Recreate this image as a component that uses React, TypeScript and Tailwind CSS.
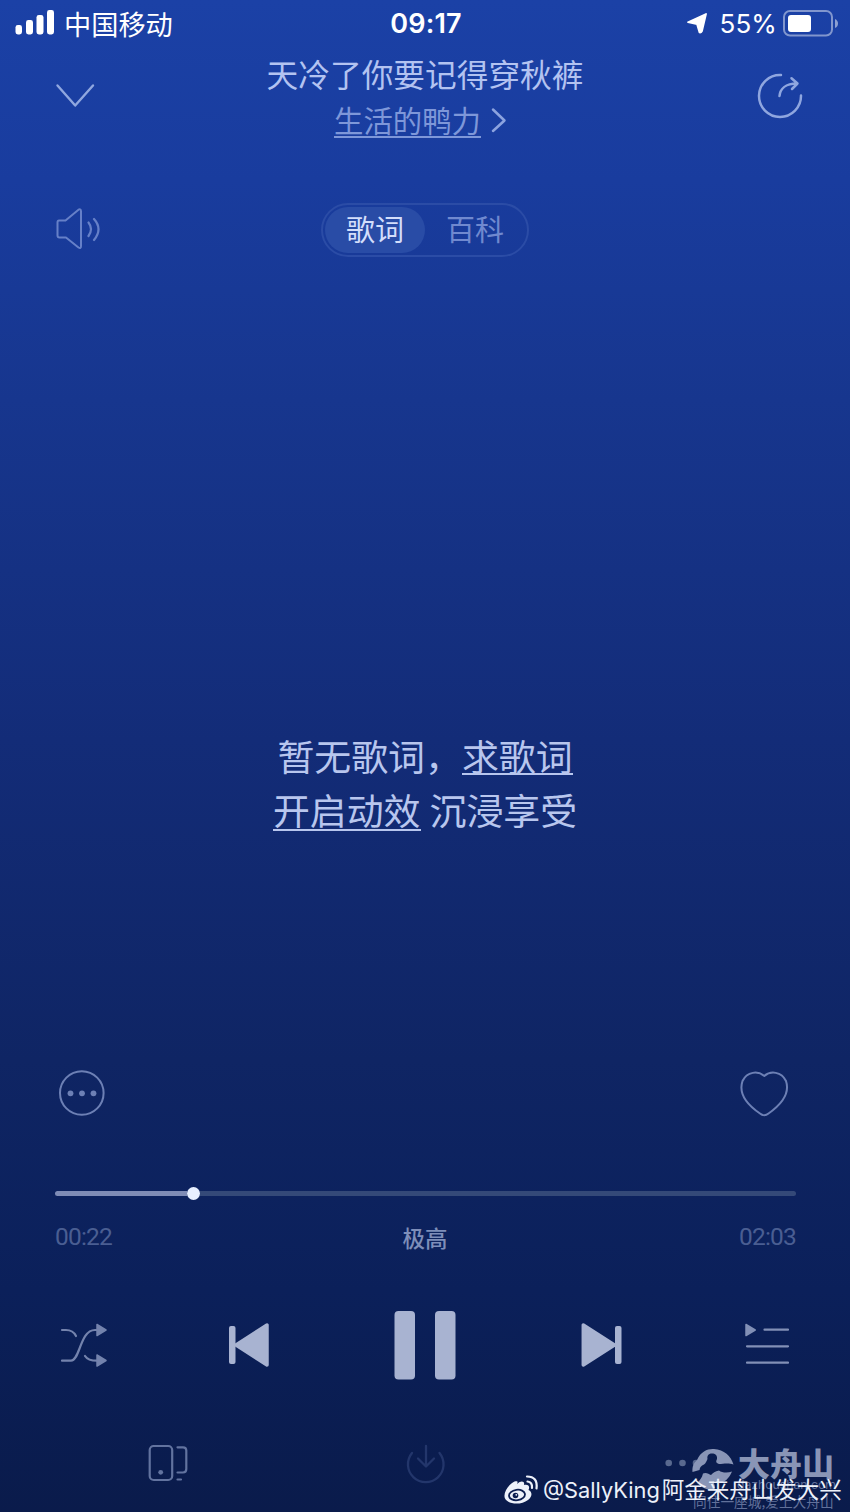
import type { ReactNode } from "react";

type IconProps = { box: string; className: string; children: ReactNode };

function Icon({ box, className, children }: IconProps) {
  return (
    <svg
      viewBox={box}
      className={`block shrink-0 ${className}`}
      fill="none"
      stroke="currentColor"
      strokeLinecap="round"
      strokeLinejoin="round"
      aria-hidden="true"
    >
      {children}
    </svg>
  );
}

function StatusBar() {
  return (
    <div className="grid h-12 grid-cols-3 items-center pr-[11px] pl-[15px] text-white">
      <div className="flex items-center">
        <Icon box="0 0 40 25" className="-mt-[3px] h-[25px] w-10">
          <g fill="currentColor" stroke="none">
            <rect x="0.5" y="15" width="6.5" height="9.5" rx="2.4" />
            <rect x="11" y="10" width="7" height="14.5" rx="2.4" />
            <rect x="21.5" y="5" width="7" height="19.5" rx="2.4" />
            <rect x="32" y="0" width="7" height="24.5" rx="2.4" />
          </g>
        </Icon>
        <span className="-mt-[3px] ml-[9px] text-[27.2px] leading-[44px] font-normal whitespace-nowrap">中国移动</span>
      </div>
      <div className="pr-[2px] text-center font-['Inter'] text-[27px] leading-[48px] font-semibold tracking-[0.2px]">
        09:17
      </div>
      <div className="flex items-center justify-end">
        <Icon box="686 13 22 22" className="-mt-[2px] h-[22px] w-[22px]">
          <path d="M706 15L688 23.2L697 25L699.500 33.5Q701 34 702 32Z" fill="currentColor" strokeWidth="1.8" />
        </Icon>
        <span className="-mt-px ml-3 font-['Inter'] text-[26px] leading-[48px] tracking-[0.1px]">55%</span>
        <Icon box="783 10 56 27" className="-mt-[2px] ml-[6px] h-[27px] w-[56px]">
          <rect x="784" y="11" width="48" height="24.5" rx="6" strokeWidth="2" opacity="0.45" />
          <rect x="788" y="15" width="23" height="17" rx="3" fill="currentColor" stroke="none" />
          <path d="M835 19Q838 20.500 838 23.500Q838 26.500 835 28Z" fill="currentColor" stroke="none" opacity="0.5" />
        </Icon>
      </div>
    </div>
  );
}

function Header() {
  return (
    <header className="flex h-[102px] items-start justify-between pr-[46px] pl-[54px]">
      <Icon box="54 80 42 30" className="mt-8 h-[30px] w-[42px] text-[#90a7df]">
        <path d="M57.500 85.500L75.200 105.500L93 85.500" strokeWidth="2.4" />
      </Icon>
      <div className="mr-[4px] -ml-[4px] flex flex-col items-center">
        <h1 className="ml-[6px] h-[50px] text-[31.7px] leading-[50px] font-normal whitespace-nowrap text-[#b3c3f1]">
          天冷了你要记得穿秋裤
        </h1>
        <div className="mr-[2px] flex h-[44px] items-center text-[#7e97d9]">
          <span className="-mt-[4px] h-[39px] border-b-2 border-[#7e97d9] text-[29.4px] leading-[40px]">生活的鸭力</span>
          <Icon box="490 108 18 27" className="ml-[9px] h-[27px] w-[18px] text-[#8ca3df]">
            <path d="M493 110.500L504.500 121.500L493 132" strokeWidth="2.5" />
          </Icon>
        </div>
      </div>
      <Icon box="756 72 48 48" className="mt-6 h-12 w-12 text-[#8fa6df]">
        <path d="M781 75A21 21 0 1 0 801 95.500" strokeWidth="2.5" />
        <path d="M779.500 96C780 89 785.500 83.500 797 83.500M791.500 78.200L797.500 83.500L792 89" strokeWidth="2.5" />
      </Icon>
    </header>
  );
}

function Tabs() {
  return (
    <div className="mt-[52px] grid h-[55px] grid-cols-3 items-center px-[54px]">
      <Icon box="54 206 48 46" className="-mt-px h-[46px] w-12 text-[#6680c8]">
        <path
          d="M59 220.500H65.500L78.500 209.700Q81 208.500 81 211.500V246Q81 249 78.500 247.500L66 237.500H59.500Q57.500 237.500 57.500 235.500V222.500Q57.500 220.500 59 220.500Z"
          strokeWidth="2"
        />
        <path d="M88.500 222.500Q93.500 229 88.500 236M94 219Q103 229 94 240" strokeWidth="2.2" />
      </Icon>
      <div className="flex h-[54px] w-[208px] items-center justify-self-center rounded-full border-2 border-[#2b4ca6] p-[2px] text-[29px] leading-[44px]">
        <span className="flex h-[46px] w-[100px] items-center justify-center rounded-full bg-[#294ca6] pb-[3px] text-[#d3defb]">
          歌词
        </span>
        <span className="flex h-[46px] w-[100px] items-center justify-center pb-[3px] text-[#7089cf]">百科</span>
      </div>
    </div>
  );
}

function Lyrics() {
  return (
    <main className="mt-[471px] flex h-[112px] flex-col items-center text-[36.9px] leading-[54px] whitespace-nowrap text-[#b8c6ee]">
      <p className="flex h-[54px]">
        暂无歌词，<span className="h-[47px] border-b-2 border-[#b8c6ee]">求歌词</span>
      </p>
      <p className="flex h-[54px] gap-[9px]">
        <span className="h-[49px] border-b-2 border-[#b8c6ee]">开启动效</span>
        <span>沉浸享受</span>
      </p>
    </main>
  );
}

function Progress() {
  return (
    <section className="mt-[67px] px-[54px]">
      <div className="flex h-4 items-center pl-px">
        <div className="h-[5px] w-[132px] rounded-l-full bg-[#7f8cb6]" />
        <div className="h-[13px] w-[13px] rounded-full bg-[#e7efff]" />
        <div className="h-[5px] flex-1 rounded-r-full bg-[#344978]" />
      </div>
      <div className="mt-[12px] grid h-[48px] grid-cols-3 items-center">
        <span className="pl-px font-['Roboto'] text-[24.5px] leading-[48px] tracking-[-0.8px] text-[#4a5e92]">00:22</span>
        <span className="text-center text-[22.5px] leading-[46px] font-medium text-[#7e8eb9]">极高</span>
        <span className="text-right font-['Roboto'] text-[24.5px] leading-[48px] tracking-[-0.8px] text-[#4a5e92]">
          02:03
        </span>
      </div>
    </section>
  );
}

function Controls() {
  return (
    <div className="mt-[44px] flex h-[80px] items-center px-[59px]">
      <Icon box="59 1320 50 50" className="h-[50px] w-[50px] text-[#7483ad]">
        <path
          d="M62 1330H66Q73 1330 76 1336M62 1360.700H71C80 1360.700 80 1330 95 1330H97M85 1356Q88 1360.700 97 1360.700"
          strokeWidth="2.2"
        />
        <path d="M97 1324.500L106 1330L97 1335.500ZM97 1355L106 1360.500L97 1366Z" fill="currentColor" strokeWidth="1.500" />
      </Icon>
      <Icon box="227 1320 44 50" className="ml-[118px] h-[50px] w-[44px] text-[#a8b3d1]">
        <rect x="229" y="1326" width="6.500" height="38" rx="2" fill="currentColor" stroke="none" />
        <path d="M236 1345L267 1325V1365Z" fill="currentColor" strokeWidth="3.500" />
      </Icon>
      <Icon box="392 1309 66 72" className="ml-[121px] h-[72px] w-[66px] text-[#a8b3d1]">
        <g fill="currentColor" stroke="none">
          <rect x="394.500" y="1311" width="20.500" height="68.500" rx="4" />
          <rect x="435" y="1311" width="20.500" height="68.500" rx="4" />
        </g>
      </Icon>
      <Icon box="579 1320 44 50" className="ml-[121px] h-[50px] w-[44px] text-[#a8b3d1]">
        <rect x="615" y="1326" width="6.500" height="38" rx="2" fill="currentColor" stroke="none" />
        <path d="M614.500 1345L583.300 1325V1365Z" fill="currentColor" strokeWidth="3.500" />
      </Icon>
      <Icon box="743 1320 48 50" className="ml-[120px] h-[50px] w-12 text-[#8290b6]">
        <path d="M746 1324.500L755.200 1330L746 1335.500Z" fill="currentColor" strokeWidth="1.500" />
        <path d="M764.500 1329.700H788M747 1346.300H788M747 1362.700H788" strokeWidth="2.200" />
      </Icon>
    </div>
  );
}

function BottomBar() {
  return (
    <div className="mt-[55px] flex h-[46px] items-center justify-between pr-[145px] pl-[146px]">
      <Icon box="146 1441 44 44" className="h-11 w-11 text-[#62739f]">
        <rect x="149.700" y="1446" width="22.500" height="34" rx="4" strokeWidth="2.200" />
        <path
          d="M177.500 1447.300H183Q186.300 1447.300 186.300 1450.500V1469Q186.300 1472.500 183 1472.500H177.500M177.500 1479.500H181"
          strokeWidth="2.200"
        />
        <circle cx="160.700" cy="1472.300" r="2.400" fill="currentColor" stroke="none" />
      </Icon>
      <Icon box="403 1441 44 44" className="h-11 w-11 text-[#23366b]">
        <path d="M411 1453A17.800 17.800 0 1 0 438.500 1453M425 1446V1466M417 1458.500L425 1466.500L433 1458.500" strokeWidth="2.300" />
      </Icon>
      <Icon box="661 1441 44 44" className="h-11 w-11 text-[#59698f]">
        <g fill="currentColor" stroke="none">
          <circle cx="668.700" cy="1463" r="3.300" />
          <circle cx="682.500" cy="1463" r="3.300" />
          <circle cx="696" cy="1463" r="3.300" />
        </g>
      </Icon>
    </div>
  );
}

function Watermarks() {
  return (
    <>
      <div className="absolute top-[1447px] left-[690px] flex h-[65px] w-[148px] text-[#8995b6]">
        <Icon box="690 1447 46 46" className="h-[46px] w-[46px]">
          <g fill="currentColor" stroke="none">
            <path d="M697 1460C701 1451 708 1448.500 714 1449C724 1449.500 731 1456 733.500 1464.500C728 1462.500 723 1464 719 1464C715.500 1463 716 1461 717 1459C717.500 1455 715 1453.500 712 1453.500C708 1453.500 707 1456 707.500 1459C706 1462 706 1463 704 1464.500C701 1466 700 1467 699.500 1470L692.500 1472C692 1466 694 1463 697 1460Z" />
            <path d="M732 1471.500C728 1473 722 1473 719 1470.500C715 1471 713 1473 711 1475C709 1474 706 1472 703 1473.500C702 1478 700 1480 697 1483C702 1488 708 1490.500 714 1490C717 1487 712 1482 715 1481C721 1485 728 1481 732 1471.500Z" />
          </g>
        </Icon>
        <div className="absolute top-[-6px] left-[48px] text-[32px] leading-[42px] font-black whitespace-nowrap">大舟山</div>
        <div className="absolute top-[28px] left-[47px] font-['Inter'] text-[12.2px] leading-[20px] text-[#61709a]">
          dazhoushan.com
        </div>
        <div className="absolute top-[44px] left-[3px] text-[13.7px] leading-[20px] whitespace-nowrap text-[#61709a]">
          同住一座城,爱上大舟山
        </div>
      </div>
      <div className="absolute top-[1473px] left-[503px] flex h-[34px] items-center whitespace-nowrap text-[#edf1fa]">
        <Icon box="503 1473 36 34" className="h-[34px] w-[36px]">
          <path
            d="M517 1484C521 1480 525 1481 524 1485C529 1484 530 1487 528.500 1490C533 1492 532 1497 528 1500C521 1505.500 508 1504.500 505 1498.500C502.500 1493 509 1484 514.500 1481.500C518 1480.500 518 1482 517 1484Z"
            fill="currentColor"
            stroke="none"
          />
          <ellipse cx="517" cy="1495" rx="8" ry="5.200" transform="rotate(-8 517 1495)" stroke="#0b1d50" strokeWidth="1.800" />
          <circle cx="515.500" cy="1495.500" r="2.800" fill="#0b1d50" stroke="none" />
          <circle cx="516.300" cy="1494.800" r="0.900" fill="currentColor" stroke="none" />
          <path d="M527.500 1481.500Q532.500 1482 532 1488M527 1476.500Q538 1476.500 536.500 1488.500" strokeWidth="2.200" />
        </Icon>
        <span className="ml-[4px] font-['Inter'] text-[21.8px] leading-[34px]">@SallyKing</span>
        <span className="ml-[2px] text-[22.5px] leading-[31px]">
          <span className="relative -top-[2px]">阿金来舟山发大兴</span>
        </span>
      </div>
    </>
  );
}

export default function App() {
  return (
    <div className="relative h-[1512px] w-[850px] overflow-hidden bg-[linear-gradient(180deg,#1b41a6_0px,#193c9e_180px,#17368e_400px,#132c78_740px,#0f2564_1060px,#0b205a_1290px,#0a1b4b_1512px)] font-['Noto_Sans_CJK_SC',sans-serif]">
      <StatusBar />
      <Header />
      <Tabs />
      <Lyrics />
      <div className="mt-[228px] flex h-[50px] items-center justify-between pr-[60px] pl-[57px]">
        <Icon box="57 1068 50 50" className="h-[50px] w-[50px] text-[#6d80b5]">
          <circle cx="81.800" cy="1093" r="21.800" strokeWidth="2" />
          <g fill="currentColor" stroke="none">
            <circle cx="70.500" cy="1093.300" r="2.900" />
            <circle cx="82" cy="1093.300" r="2.900" />
            <circle cx="93.500" cy="1093.300" r="2.900" />
          </g>
        </Icon>
        <Icon box="738 1068 52 50" className="h-[50px] w-[52px] text-[#6d80b5]">
          <path
            d="M764.300 1076C758 1070.500 747 1071.500 742.500 1081C738.500 1093 746 1104 760 1113.500Q764.300 1117 768.500 1113.500C782 1104 790 1093 786 1081C781.500 1071.500 770.500 1070.500 764.300 1076Z"
            strokeWidth="2"
          />
        </Icon>
      </div>
      <Progress />
      <Controls />
      <BottomBar />
      <Watermarks />
    </div>
  );
}
